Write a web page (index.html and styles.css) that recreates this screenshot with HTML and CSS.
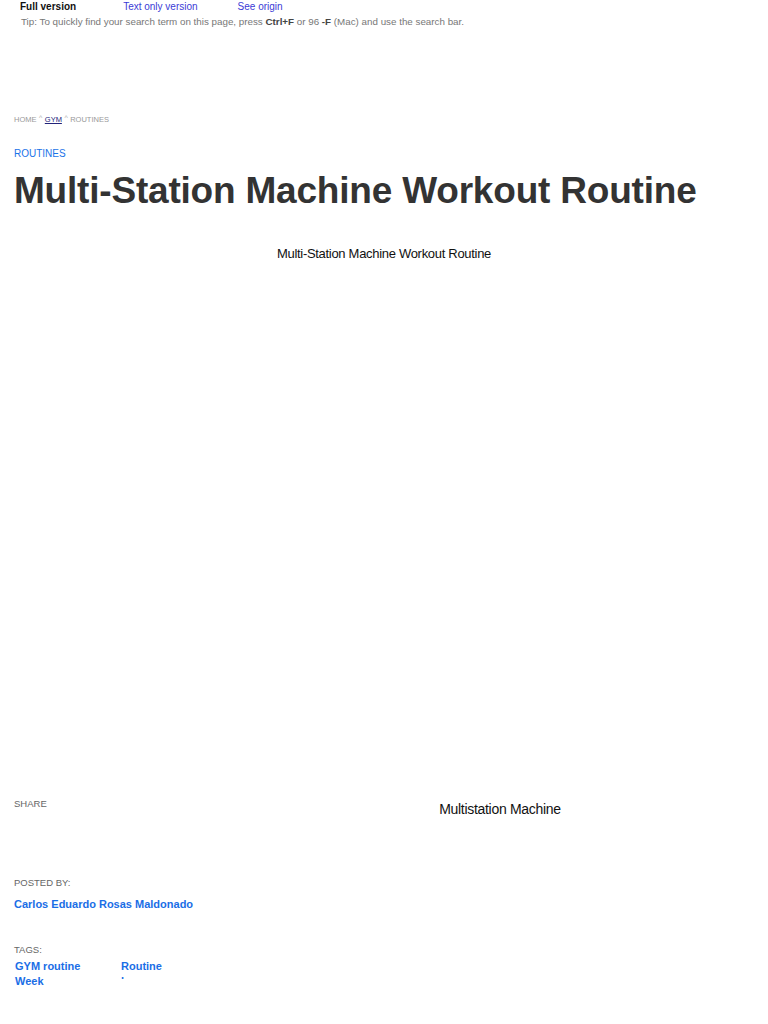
FILE: index.html
```html
<!DOCTYPE html>
<html lang="en">
<head>
<meta charset="utf-8">
<title>Multi-Station Machine Workout Routine</title>
<link rel="stylesheet" href="styles.css">
</head>
<body>
<div class="topbar">
  <div class="versions">
    <span class="ver-current">Full version</span>
    <a class="ver-link ver-text" href="#">Text only version</a>
    <a class="ver-link" href="#">See origin</a>
  </div>
  <div class="tip">Tip: To quickly find your search term on this page, press <b>Ctrl+F</b> or 96 <b>-F</b> (Mac) and use the search bar.</div>
</div>

<main class="article">
  <nav class="crumbs">
    <a href="#" class="crumb">HOME</a>
    <span class="sep">^</span>
    <a href="#" class="crumb crumb-active">GYM</a>
    <span class="sep">^</span>
    <a href="#" class="crumb">ROUTINES</a>
  </nav>

  <a href="#" class="category">ROUTINES</a>
  <h1 class="title">Multi-Station Machine Workout Routine</h1>

  <figure class="hero">
    <figcaption class="hero-alt">Multi-Station Machine Workout Routine</figcaption>
  </figure>

  <div class="meta-row">
    <div class="meta-left">
      <div class="label">SHARE</div>
    </div>
    <div class="meta-right">Multistation Machine</div>
  </div>

  <section class="posted">
    <div class="label">POSTED BY:</div>
    <a href="#" class="author">Carlos Eduardo Rosas Maldonado</a>
  </section>

  <section class="tags">
    <div class="label">TAGS:</div>
    <div class="tag-grid">
      <a href="#" class="tag">GYM routine Week</a>
      <a href="#" class="tag tag-clip">Routine by muscle group</a>
    </div>
  </section>
</main>
</body>
</html>
```

FILE: styles.css
```css
html, body {
  margin: 0;
  padding: 0;
  background: #ffffff;
}

body {
  font-family: "Liberation Sans", Arial, sans-serif;
  color: #222;
}

a {
  text-decoration: none;
}

.topbar {
  padding: 1px 0 0 20px;
}

.versions {
  display: flex;
  align-items: center;
  height: 12px;
  font-size: 10px;
  line-height: 12px;
}

.ver-current {
  font-weight: bold;
  color: #111;
  margin-right: 47px;
}

.ver-link {
  color: #3b3bd6;
}

.ver-text {
  margin-right: 40px;
}

.tip {
  margin-top: 3px;
  padding-left: 1px;
  font-size: 9.8px;
  line-height: 12px;
  color: #777;
}

.tip b {
  color: #444;
}

.article {
  padding: 0 14px;
}

.crumbs {
  margin-top: 87px;
  display: flex;
  align-items: center;
  gap: 2.5px;
  font-size: 7.5px;
  line-height: 10px;
  color: #999;
}

.crumb {
  color: #999;
}

.crumb-active {
  color: #22237a;
  text-decoration: underline;
}

.sep {
  position: relative;
  top: -2px;
  font-size: 7px;
  color: #aaa;
}

.category {
  display: block;
  margin-top: 23px;
  font-size: 10px;
  line-height: 12px;
  color: #1a73e8;
}

.title {
  margin: 9px 0 0;
  font-size: 37px;
  line-height: 44px;
  font-weight: bold;
  color: #333;
  letter-spacing: -0.2px;
}

.hero {
  margin: 0;
  height: 585px;
  padding-top: 33px;
  box-sizing: border-box;
}

.hero-alt {
  text-align: center;
  font-size: 13px;
  line-height: 16px;
  color: #111;
  letter-spacing: -0.3px;
}

.meta-row {
  display: grid;
  grid-template-columns: 232px 1fr;
}

.meta-right {
  text-align: center;
  font-size: 14px;
  line-height: 16px;
  color: #111;
  padding-top: 3px;
  letter-spacing: -0.3px;
}

.label {
  font-size: 9.5px;
  line-height: 12px;
  color: #666;
}

.posted {
  margin-top: 60px;
}

.author {
  display: block;
  margin-top: 8px;
  font-size: 11px;
  line-height: 14px;
  font-weight: bold;
  color: #1a6ee6;
}

.tags {
  margin-top: 33px;
}

.tag-grid {
  margin-top: 3px;
  display: grid;
  grid-template-columns: 106px 106px;
  padding-left: 1px;
}

.tag {
  font-size: 11px;
  line-height: 15px;
  font-weight: bold;
  color: #1a6ee6;
  width: 70px;
}

.tag-clip {
  width: 50px;
  height: 20px;
  overflow: hidden;
}
```
